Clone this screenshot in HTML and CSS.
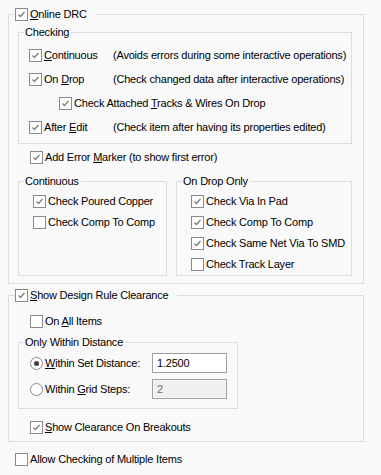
FILE: index.html
```html
<!DOCTYPE html>
<html lang="en">
<head>
    <meta charset="UTF-8">
    <meta name="viewport" content="width=device-width, initial-scale=1.0">
    <title>Online DRC Options</title>
    <link rel="stylesheet" href="styles.css">
</head>
<body>
    <div class="panel">
        <!-- Online DRC -->
        <div class="group outer">
            <div class="group-title">
                <label class="check"><span class="box"><svg viewBox="0 0 11 11"><path d="M2.5 5.5 L4.5 7.5 L8.5 3"/></svg></span><span><u>O</u>nline DRC</span></label>
            </div>

            <div class="group checking">
                <div class="group-title"><span>Checking</span></div>
                <div class="rows">
                    <div class="row">
                        <label class="check first-col"><span class="box"><svg viewBox="0 0 11 11"><path d="M2.5 5.5 L4.5 7.5 L8.5 3"/></svg></span><span><u>C</u>ontinuous</span></label>
                        <span>(Avoids errors during some interactive operations)</span>
                    </div>
                    <div class="row">
                        <label class="check first-col"><span class="box"><svg viewBox="0 0 11 11"><path d="M2.5 5.5 L4.5 7.5 L8.5 3"/></svg></span><span>On <u>D</u>rop</span></label>
                        <span>(Check changed data after interactive operations)</span>
                    </div>
                    <div class="row indent">
                        <label class="check"><span class="box"><svg viewBox="0 0 11 11"><path d="M2.5 5.5 L4.5 7.5 L8.5 3"/></svg></span><span>Check Attached <u>T</u>racks &amp; Wires On Drop</span></label>
                    </div>
                    <div class="row">
                        <label class="check first-col"><span class="box"><svg viewBox="0 0 11 11"><path d="M2.5 5.5 L4.5 7.5 L8.5 3"/></svg></span><span>After <u>E</u>dit</span></label>
                        <span>(Check item after having its properties edited)</span>
                    </div>
                </div>
            </div>

            <label class="check marker"><span class="box"><svg viewBox="0 0 11 11"><path d="M2.5 5.5 L4.5 7.5 L8.5 3"/></svg></span><span>Add Error <u>M</u>arker (to show first error)</span></label>

            <div class="pair">
                <div class="group sub left">
                    <div class="group-title"><span>Continuous</span></div>
                    <div class="sub-rows">
                        <label class="check"><span class="box"><svg viewBox="0 0 11 11"><path d="M2.5 5.5 L4.5 7.5 L8.5 3"/></svg></span><span>Check Poured Copper</span></label>
                        <label class="check"><span class="box"></span><span>Check Comp To Comp</span></label>
                    </div>
                </div>
                <div class="group sub right">
                    <div class="group-title"><span>On Drop Only</span></div>
                    <div class="sub-rows">
                        <label class="check"><span class="box"><svg viewBox="0 0 11 11"><path d="M2.5 5.5 L4.5 7.5 L8.5 3"/></svg></span><span>Check Via In Pad</span></label>
                        <label class="check"><span class="box"><svg viewBox="0 0 11 11"><path d="M2.5 5.5 L4.5 7.5 L8.5 3"/></svg></span><span>Check Comp To Comp</span></label>
                        <label class="check"><span class="box"><svg viewBox="0 0 11 11"><path d="M2.5 5.5 L4.5 7.5 L8.5 3"/></svg></span><span>Check Same Net Via To SMD</span></label>
                        <label class="check"><span class="box"></span><span>Check Track Layer</span></label>
                    </div>
                </div>
            </div>
        </div>

        <!-- Show Design Rule Clearance -->
        <div class="group outer second">
            <div class="group-title">
                <label class="check"><span class="box"><svg viewBox="0 0 11 11"><path d="M2.5 5.5 L4.5 7.5 L8.5 3"/></svg></span><span><u>S</u>how Design Rule Clearance</span></label>
            </div>

            <label class="check all-items"><span class="box"></span><span>On <u>A</u>ll Items</span></label>

            <div class="group distance">
                <div class="group-title"><span>Only Within Distance</span></div>
                <div class="dist-row first">
                    <label class="check dist-label"><span class="radio on"></span><span><u>W</u>ithin Set Distance:</span></label>
                    <input class="num" type="text" value="1.2500">
                </div>
                <div class="dist-row">
                    <label class="check dist-label"><span class="radio"></span><span>Within <u>G</u>rid Steps:</span></label>
                    <input class="num" type="text" value="2" disabled>
                </div>
            </div>

            <label class="check breakouts"><span class="box"><svg viewBox="0 0 11 11"><path d="M2.5 5.5 L4.5 7.5 L8.5 3"/></svg></span><span><u>S</u>how Clearance On Breakouts</span></label>
        </div>

        <label class="check multiple"><span class="box"></span><span>Allow Checking of Multiple Items</span></label>
    </div>
</body>
</html>
```

FILE: styles.css
```css
body {
    margin: 0;
    background-color: #f9f9f9;
    color: #000;
    font-family: "Liberation Sans", Arial, sans-serif;
    font-size: 11px;
    letter-spacing: -0.2px;
}

u {
    text-decoration-thickness: 1px;
    text-underline-offset: 1px;
}

.panel {
    padding: 14px 0 20px 8px;
    width: 356px;
}

/* Group boxes */
.group {
    border: 1px solid #dcdcdc;
    box-sizing: border-box;
}

.group-title {
    display: flex;
    align-items: center;
    width: max-content;
    height: 13px;
    line-height: 13px;
    margin: -7px 0 0 5px;
    padding: 0 2px 0 1px;
    background-color: #f9f9f9;
}

.outer > .group-title {
    padding-right: 8px;
}

.outer {
    width: 356px;
    padding-bottom: 7px;
}

/* Checkboxes and radios */
.check {
    display: flex;
    align-items: center;
    gap: 2px;
    height: 13px;
    line-height: 13px;
    white-space: nowrap;
}

.box {
    flex: none;
    width: 13px;
    height: 13px;
    box-sizing: border-box;
    border: 1px solid #8a8a8a;
    background-color: #fff;
}

.box svg {
    display: block;
    width: 11px;
    height: 11px;
    fill: none;
    stroke: #7d7d7d;
    stroke-width: 1.3;
}

.radio {
    flex: none;
    width: 13px;
    height: 13px;
    box-sizing: border-box;
    border: 1px solid #8a8a8a;
    border-radius: 50%;
    background-color: #fff;
    display: flex;
    align-items: center;
    justify-content: center;
}

.radio.on::after {
    content: "";
    width: 5px;
    height: 5px;
    border-radius: 50%;
    background-color: #404040;
}

/* Checking */
.checking {
    margin: 11px 11px 0 9px;
    padding-bottom: 9px;
}

.rows {
    display: flex;
    flex-direction: column;
    gap: 11px;
    margin-top: 10px;
    padding-left: 10px;
}

.row {
    display: flex;
    align-items: center;
    height: 13px;
    line-height: 13px;
}

.first-col {
    width: 84px;
}

.row.indent {
    padding-left: 30px;
}

.marker {
    margin: 7px 0 0 21px;
}

/* Continuous / On Drop Only */
.pair {
    display: flex;
    gap: 9px;
    margin: 17px 11px 0 9px;
}

.sub {
    padding-bottom: 4px;
}

.sub.left {
    width: 149px;
}

.sub.right {
    width: 176px;
}

.sub-rows {
    display: flex;
    flex-direction: column;
    gap: 8px;
    margin-top: 7px;
    padding-left: 14px;
}

/* Show Design Rule Clearance */
.second {
    margin-top: 11px;
}

.all-items {
    margin: 13px 0 0 21px;
}

.distance {
    width: 220px;
    margin: 14px 0 0 9px;
    padding-bottom: 9px;
}

.dist-row {
    display: flex;
    align-items: center;
    height: 20px;
    margin-top: 6px;
    padding-left: 11px;
}

.dist-row.first {
    margin-top: 4px;
}

.dist-label {
    width: 122px;
}

.num {
    box-sizing: border-box;
    width: 75px;
    height: 20px;
    margin: 0;
    padding: 0 4px;
    border: 1px solid #a0a0a0;
    background-color: #fff;
    font-family: "Liberation Sans", Arial, sans-serif;
    font-size: 11px;
    letter-spacing: -0.2px;
    color: #000;
    outline: none;
}

.num:disabled {
    background-color: #f0f0f0;
    color: #6d6d6d;
    box-shadow: inset 0 0 0 1px #f7f7f7;
}

.breakouts {
    margin: 12px 0 0 21px;
}

.multiple {
    margin: 11px 0 0 7px;
}
```
